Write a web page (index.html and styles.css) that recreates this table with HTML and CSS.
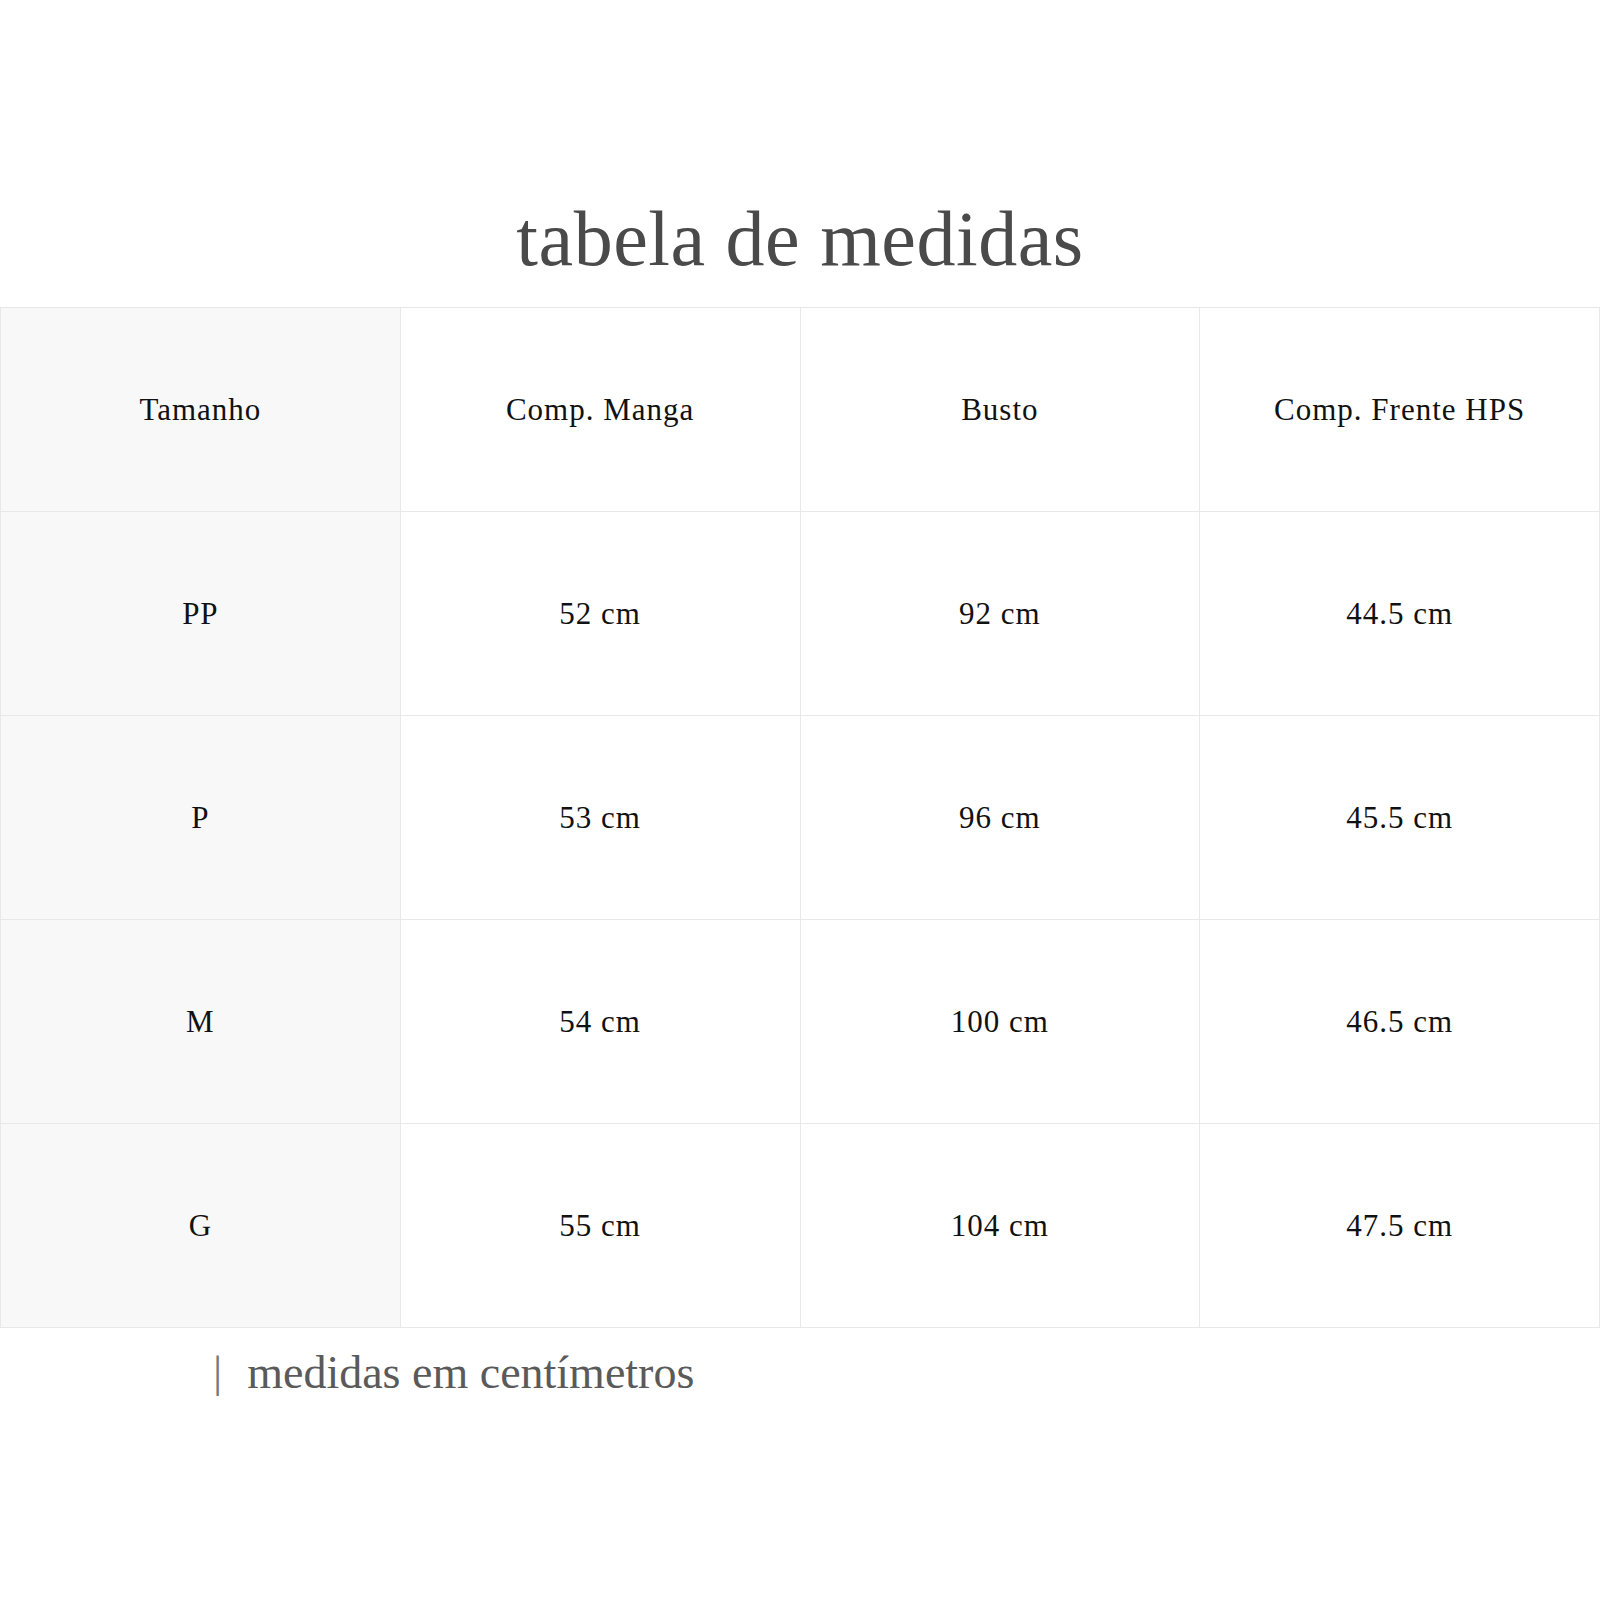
FILE: index.html
```html
<!DOCTYPE html>
<html lang="pt">
<head>
<meta charset="utf-8">
<title>tabela de medidas</title>
<link rel="stylesheet" href="styles.css">
</head>
<body>
<div class="page">
  <h1 class="title">tabela de medidas</h1>
  <table class="sizes">
    <tr>
      <td class="first">Tamanho</td>
      <td>Comp. Manga</td>
      <td>Busto</td>
      <td>Comp. Frente HPS</td>
    </tr>
    <tr>
      <td class="first">PP</td>
      <td>52 cm</td>
      <td>92 cm</td>
      <td>44.5 cm</td>
    </tr>
    <tr>
      <td class="first">P</td>
      <td>53 cm</td>
      <td>96 cm</td>
      <td>45.5 cm</td>
    </tr>
    <tr>
      <td class="first">M</td>
      <td>54 cm</td>
      <td>100 cm</td>
      <td>46.5 cm</td>
    </tr>
    <tr>
      <td class="first">G</td>
      <td>55 cm</td>
      <td>104 cm</td>
      <td>47.5 cm</td>
    </tr>
  </table>
  <p class="note"><span class="bar">|</span>medidas em centímetros</p>
</div>
</body>
</html>
```

FILE: styles.css
```css
html, body {
  margin: 0;
  padding: 0;
  background: #ffffff;
}

.page {
  width: 1600px;
  padding-top: 200px;
  font-family: "Liberation Serif", serif;
}

.title {
  margin: 0 0 29px 0;
  font-family: "Liberation Serif", serif;
  font-weight: normal;
  font-size: 78px;
  line-height: 1;
  text-align: center;
  color: #4a4a4a;
  letter-spacing: 0.5px;
}

.sizes {
  width: 1600px;
  border-collapse: collapse;
  table-layout: fixed;
}

.sizes td {
  height: 203px;
  padding: 0;
  border: 1px solid #e8e8e8;
  text-align: center;
  vertical-align: middle;
  font-family: "Liberation Serif", serif;
  font-size: 31px;
  letter-spacing: 1px;
  color: #111111;
}

.sizes td.first {
  background: #f8f8f8;
}

.note {
  margin: 22px 0 0 0;
  padding-left: 213px;
  font-family: "Liberation Serif", serif;
  font-size: 46px;
  line-height: 1;
  color: #5a5a5a;
}

.bar {
  display: inline-block;
  margin-right: 25px;
  color: #777777;
}
```
